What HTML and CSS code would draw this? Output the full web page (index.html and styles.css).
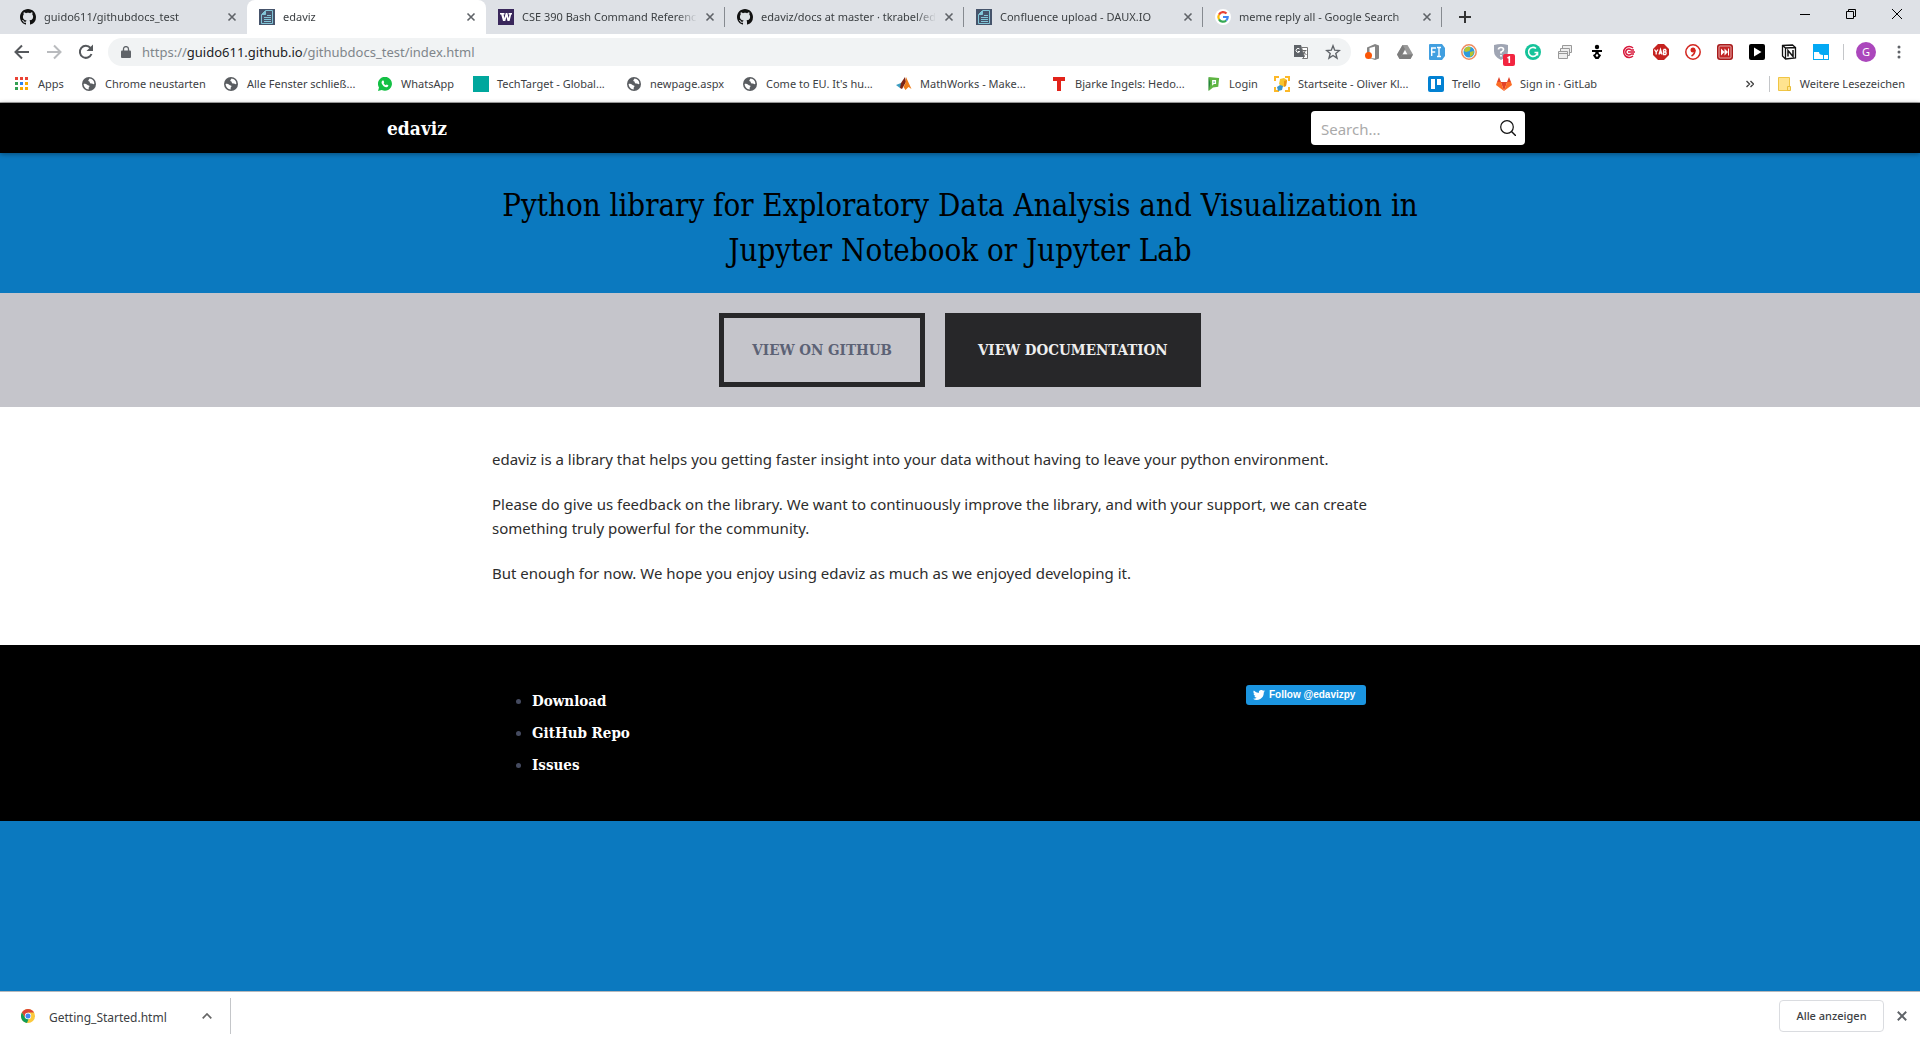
FILE: index.html
```html
<!DOCTYPE html>
<html lang="de">
<head>
<meta charset="utf-8">
<title>edaviz</title>
<link rel="stylesheet" href="styles.css">
</head>
<body>
<svg class="sprite" aria-hidden="true">
  <symbol id="github" viewBox="0 0 16 16"><path fill="#111" d="M8 0C3.58 0 0 3.58 0 8c0 3.54 2.29 6.53 5.47 7.59.4.07.55-.17.55-.38 0-.19-.01-.82-.01-1.49-2.01.37-2.53-.49-2.69-.94-.09-.23-.48-.94-.82-1.13-.28-.15-.68-.52-.01-.53.63-.01 1.08.58 1.23.82.72 1.21 1.87.87 2.33.66.07-.52.28-.87.51-1.07-1.78-.2-3.64-.89-3.64-3.95 0-.87.31-1.59.82-2.15-.08-.2-.36-1.02.08-2.12 0 0 .67-.21 2.2.82.64-.18 1.32-.27 2-.27s1.36.09 2 .27c1.53-1.04 2.2-.82 2.2-.82.44 1.1.16 1.92.08 2.12.51.56.82 1.27.82 2.15 0 3.07-1.87 3.75-3.65 3.95.29.25.54.73.54 1.48 0 1.07-.01 1.93-.01 2.2 0 .21.15.46.55.38A8.01 8.01 0 0 0 16 8c0-4.42-3.58-8-8-8z"/></symbol>
  <symbol id="daux" viewBox="0 0 16 16"><path fill="#46546b" d="M0 0h16v16H0z"/><path fill="none" stroke="#82c6d8" d="M6.500 1.500h7v13h-11v-9zM6.500 2v3.500H3M5 8.500h7M5 10.500h7M5 12.500h7M8 6.500h4"/><path fill="#82c6d8" d="M6.500 1.500v4h-4z"/></symbol>
  <symbol id="close" viewBox="0 0 10 10"><path fill="none" stroke="#5f6368" stroke-width="1.6" d="M1.500 1.500l7 7M8.500 1.500l-7 7"/></symbol>
  <symbol id="globe" viewBox="0 0 14 14"><circle cx="7" cy="7" r="7" fill="#5a5d61"/><path fill="#fff" d="M7.500 1.500c2.800.2 4.700 2.300 4.900 5-.5 1-1.200.6-1.900.2-.8-.4-1.400.1-2.300-.5-.7-.5-.2-1.300-.9-1.600-.8-.3-1.300-.7-.8-1.500zM1.600 7c1.200-.3 2.600-.2 3.600.7.900.8 1.900.5 2.200 1.200.4.800-.8 1.200-.8 2 0 .5.300.9.100 1.500C3.900 12.200 1.700 10 1.600 7z"/></symbol>
</svg>

<header class="browser">
  <div class="tabstrip">
    <div class="tabs">
      <div class="tab"><svg class="i16"><use href="#github"/></svg><span>guido611/githubdocs_test</span><button aria-label="Tab schließen"><svg><use href="#close"/></svg></button></div>
      <div class="tab active"><svg class="i16"><use href="#daux"/></svg><span>edaviz</span><button aria-label="Tab schließen"><svg><use href="#close"/></svg></button></div>
      <div class="tab ruled"><svg class="i16" viewBox="0 0 16 16"><path fill="#39275b" d="M0 0h16v16H0z"/><path fill="#fff" d="M2 4h4.500v1.500h-.9l.8 3.700L7.700 4h1.700l1.200 5.200.8-3.700h-.9V4H14v1.500h-.8L11.600 12H9.500L8.400 7.700 7.300 12H5L3.200 5.500H2z"/></svg><span>CSE 390 Bash Command Reference</span><button aria-label="Tab schließen"><svg><use href="#close"/></svg></button></div>
      <div class="tab ruled"><svg class="i16"><use href="#github"/></svg><span>edaviz/docs at master · tkrabel/edaviz</span><button aria-label="Tab schließen"><svg><use href="#close"/></svg></button></div>
      <div class="tab ruled"><svg class="i16"><use href="#daux"/></svg><span>Confluence upload - DAUX.IO</span><button aria-label="Tab schließen"><svg><use href="#close"/></svg></button></div>
      <div class="tab ruled"><svg class="i16" viewBox="0 0 16 16"><circle cx="8" cy="8" r="8" fill="#fff"/><g fill="none" stroke-width="2.200"><path stroke="#ea4335" d="M4 5.600a4.700 4.700 0 0 1 7.500-1"/><path stroke="#fbbc05" d="M4 5.600a4.900 4.900 0 0 0 0 4.800"/><path stroke="#34a853" d="M4 10.400a4.700 4.700 0 0 0 7.200 1.100"/><path stroke="#4285f4" d="M8 8h4.700a4.700 4.700 0 0 1-1.500 3.500"/></g></svg><span>meme reply all - Google Search</span><button aria-label="Tab schließen"><svg><use href="#close"/></svg></button></div>
      <button class="newtab" aria-label="Neuer Tab"><svg viewBox="0 0 12 12"><path stroke="#333" stroke-width="2" d="M6 0v12M0 6h12"/></svg></button>
    </div>
    <div class="winctl">
      <button aria-label="Minimieren"><svg viewBox="0 0 12 12"><path stroke="#000" d="M1 6.500h10"/></svg></button>
      <button aria-label="Verkleinern"><svg viewBox="0 0 12 12"><path fill="none" stroke="#000" d="M1.500 3.500h7v7h-7zM3.500 3.500v-2h7v7h-2"/></svg></button>
      <button aria-label="Schließen"><svg viewBox="0 0 12 12"><path stroke="#000" d="M1 1l10 10M11 1L1 11"/></svg></button>
    </div>
  </div>

  <div class="toolbar">
    <div class="nav">
      <button aria-label="Zurück"><svg viewBox="0 0 16 16"><path fill="none" stroke="#55585c" stroke-width="2" d="M15 8H2M8 1.500L1.500 8 8 14.500"/></svg></button>
      <button aria-label="Vorwärts"><svg viewBox="0 0 16 16"><path fill="none" stroke="#b9bbbe" stroke-width="2" d="M1 8h13M8 1.500L14.500 8 8 14.500"/></svg></button>
      <button aria-label="Neu laden"><svg viewBox="0 0 16 16"><path fill="none" stroke="#55585c" stroke-width="2" d="M13.500 10A6 6 0 1 1 12.500 4"/><path fill="#55585c" d="M15 .5V7H8.500z"/></svg></button>
    </div>
    <div class="omnibox">
      <svg class="lock" viewBox="0 0 10 12"><path fill="#5f6368" d="M1 4.500h8q1 0 1 1V11q0 1-1 1H1q-1 0-1-1V5.500q0-1 1-1z"/><path fill="none" stroke="#5f6368" stroke-width="1.300" d="M2.500 5V3a2.500 2.400 0 0 1 5 0v2"/></svg>
      <a class="url" href="#">https://<b>guido611.github.io</b>/githubdocs_test/index.html</a>
      <div class="omni-actions">
        <svg class="i16" viewBox="0 0 16 16"><path fill="#5f6368" d="M1 1h7l4 12H1z"/><path fill="#fff" stroke="#777" d="M8.500 3.500h6v11h-5l2-2z"/><path fill="none" stroke="#fff" d="M6.500 5a2 2 0 1 0 .3 2.500H5"/><path fill="none" stroke="#666" d="M9.500 6.500h4M12 6.500c0 2-1 3-2 4M10.500 8l3 3"/></svg>
        <svg class="i16" viewBox="0 0 16 16"><path fill="none" stroke="#5f6368" stroke-width="1.400" d="M8 1.800l1.700 4.400 4.700.3-3.600 3 1.200 4.600L8 11.500l-4 2.600 1.200-4.600-3.600-3 4.700-.3z"/></svg>
      </div>
    </div>
    <div class="ext">
      <svg viewBox="0 0 16 16"><path fill="#858585" d="M2 3.500L10 0l4 1.500v13L10 16l-6-2 6 .5v-12L4.500 4v7L2 12z"/><circle cx="3.500" cy="11.500" r="3.500" fill="#fb5607"/></svg>
      <svg viewBox="0 0 16 16"><path fill="#999" d="M5.500 1h5L16 10.500 13.500 15h-11L0 10.500z"/><path fill="#707070" d="M5.500 1l2.500 4-5.500 10L0 10.500zM5.500 10.500H16L13.500 15h-11z" opacity=".7"/><path fill="#fff" d="M8 6l2.300 4.300H5.700z"/></svg>
      <svg viewBox="0 0 16 16"><path fill="#419fe0" d="M1 0h12l3 4v8l-3 4H1q-1 0-1-1V1q0-1 1-1z"/><path fill="none" stroke="#fff" stroke-width="1.400" d="M2.700 12V4H7M2.700 8h3.500M8 3.500h4M10 3.500v9M8 12.500h4"/></svg>
      <svg viewBox="0 0 16 16"><circle cx="8" cy="8" r="7.200" fill="#fff" stroke="#ef8b5f" stroke-width="1.500"/><circle cx="8" cy="8" r="5.500" fill="#2f9bdc"/><path fill="#b5c531" d="M4 4l3-1.500 3 1L8.500 7 5 8 3 7zM9 8l4-1-1 4-3 2z"/></svg>
      <svg viewBox="0 0 16 16"><path fill="#9fa5b3" d="M1 1q7-2 14 0v6q0 6-7 9-7-3-7-9z"/><path fill="none" stroke="#fff" stroke-width="1.700" d="M5.500 5.500q0-2 2.500-2t2.500 2Q10.500 7 8 8v1.500M8 11v1.500"/><rect x="10" y="10" width="12" height="12" rx="2" fill="#f22540"/><path fill="none" stroke="#fff" stroke-width="1.600" d="M14.500 14l1.800-1v6"/></svg>
      <svg viewBox="0 0 16 16"><circle cx="8" cy="8" r="8" fill="#15c39a"/><path fill="none" stroke="#fff" stroke-width="1.600" d="M11 4.500A4.500 4.500 0 1 0 12.500 8.500H9.500M12.500 8.500v3"/></svg>
      <svg viewBox="0 0 16 16"><g fill="#eee" stroke="#999"><path d="M5.500 1.500h9v7h-9z"/><path d="M3.500 4.500h9v7h-9z"/><path d="M1.500 7.500h9v7h-9zM1.500 9.500h9"/></g></svg>
      <svg viewBox="0 0 16 16"><circle cx="8" cy="3" r="2.200"/><path d="M3 6h10v2H9.500l.5 2q1.500.3 2 1.500L9.500 15H6.500L4 11.500q.5-1.200 2-1.500l.5-2H3z"/><circle cx="8" cy="11.500" r="1.200" fill="#fff"/></svg>
      <svg viewBox="0 0 16 16"><g fill="none" stroke="#d8173a" stroke-width="1.500"><path d="M12 4a5.500 5.500 0 1 0 0 8"/><path d="M10 6a3 3 0 1 0 0 4M7 8h7M10 6h3M10 10h3"/></g></svg>
      <svg viewBox="0 0 16 16"><path fill="#c5221f" d="M5 0h6l5 5v6l-5 5H5l-5-5V5z"/><path fill="none" stroke="#fff" stroke-width="1.300" d="M1.500 5.500L3.200 8l1.700-2.500M3.200 8v2.500M6 10.500l1.500-5 1.500 5M6.500 9h2M10.500 5.500v5h2q1.300-1.300 0-2.500 1-1.200 0-2.500h-2M10.500 8h2"/></svg>
      <svg viewBox="0 0 16 16"><circle cx="8" cy="8" r="7.200" fill="#fff" stroke="#d3261f" stroke-width="1.500"/><circle cx="8" cy="6" r="2.500" fill="#d3261f"/><path fill="none" stroke="#d3261f" stroke-width="1.500" d="M10 6q0 4-3.500 6"/></svg>
      <svg viewBox="0 0 16 16"><rect width="16" height="16" rx="3" fill="#a81c1c"/><rect x="2" y="2" width="12" height="12" rx="1" fill="#c32626" stroke="#e8a9a9"/><path fill="#fff" d="M4 4.500L7.500 8 4 11.500zM7.500 4.500L11 8l-3.500 3.500zM11 4.500h1v7h-1z"/></svg>
      <svg viewBox="0 0 16 16"><rect width="16" height="16" rx="2"/><path fill="#fff" d="M5 3.500L12.500 8 5 12.500z"/></svg>
      <svg viewBox="0 0 16 16"><path fill="#fff" stroke="#111" stroke-width="1.300" d="M1.500 1.500l10-.5 3 2.500V14l-10 1-3-3zM1.500 1.500l3 2.500 10-.5M4.500 4v11"/><path fill="none" stroke="#111" stroke-width="1.500" d="M7 12.500V6.500l5 6v-6.500"/></svg>
      <svg viewBox="0 0 16 16"><path fill="#03a9f4" d="M0 0h16v16H0z"/><path fill="#fff" d="M1 8h5q0 3 4 3h5v4H1z"/><path stroke="#03a9f4" d="M10.500 11v4"/></svg>
    </div>
    <span class="rule"></span>
    <button class="avatar" aria-label="Profil">G</button>
    <button class="dots" aria-label="Menü"><svg viewBox="0 0 4 16"><g fill="#5f6368"><circle cx="2" cy="3" r="1.500"/><circle cx="2" cy="8" r="1.500"/><circle cx="2" cy="13" r="1.500"/></g></svg></button>
  </div>

  <nav class="bookmarks">
    <div class="marks">
      <a href="#"><svg viewBox="0 0 14 14"><path fill="#ea4335" d="M0 0h3v3H0zM5 0h3v3H5zM10 0h3v3h-3z"/><path fill="#34a053" d="M0 5h3v3H0zM0 10h3v3H0z"/><path fill="#2a84f0" d="M5 5h3v3H5z"/><path fill="#f9ab00" d="M10 5h3v3h-3zM5 10h3v3H5zM10 10h3v3h-3z"/></svg>Apps</a>
      <a href="#"><svg><use href="#globe"/></svg>Chrome neustarten</a>
      <a href="#"><svg><use href="#globe"/></svg>Alle Fenster schließ...</a>
      <a href="#"><svg viewBox="0 0 14 14"><path fill="#14c045" d="M0 14l1-3.500A7 7 0 1 1 3.700 13z"/><path fill="#fff" d="M4.500 3.500l1 .1.700 1.700-.6.900q.8 1.500 2.200 2.100l.8-.9 1.800.9q0 1.500-1.700 1.900-3.400 0-5.200-4.200 0-1.700 1-2.500z"/></svg>WhatsApp</a>
      <a class="wide" href="#"><svg viewBox="0 0 16 16"><path fill="#00a79d" d="M0 0h16v16H0z"/></svg>TechTarget - Global...</a>
      <a href="#"><svg><use href="#globe"/></svg>newpage.aspx</a>
      <a href="#"><svg><use href="#globe"/></svg>Come to EU. It's hu...</a>
      <a class="wide" href="#"><svg viewBox="0 0 16 16"><path fill="#3b9cc0" d="M0 9l5-2 2 2-3 3z"/><path fill="#7e2515" d="M5 7l4-6 1 5-4 7-2-1z"/><path fill="#ef7d1a" d="M10 1l5.500 12-3-2-3 3-2-3 2-4z"/></svg>MathWorks - Make...</a>
      <a href="#"><svg viewBox="0 0 14 14"><path fill="#e2231a" d="M1 0h12v4H9v10H5V4H1z"/></svg>Bjarke Ingels: Hedo...</a>
      <a href="#"><svg viewBox="0 0 14 16"><path fill="#5fb543" d="M2 0l12 1-1 10-6 1-5 4z"/><path fill="#24833f" d="M2 0l2 7-2 9z"/><path fill="#fff" d="M6 3.500h4.500v4.500H8l-2 2z"/><path fill="#24a56a" d="M7.500 5H9v1.500H7.500z"/></svg>Login</a>
      <a class="wide" href="#"><svg viewBox="0 0 16 16"><path fill="none" stroke="#fdb827" stroke-width="2" d="M5 1H1v4M11 1h4v4M1 11v4h4M15 11v4h-4"/><path fill="#f8c52c" d="M6 3l4-1 3 2-1 6-4 1-3-3z"/><path fill="#ea9410" d="M10 5l3-1-1 6-2 1z"/><path fill="#3b95c9" d="M3 11l3-2 3 1-1 4-4 1z"/></svg>Startseite - Oliver Kl...</a>
      <a class="wide" href="#"><svg viewBox="0 0 16 16"><rect width="16" height="16" rx="2" fill="#0281d2"/><path fill="#fff" d="M3 3h4v10H3zM9 3h4v6H9z"/></svg>Trello</a>
      <a class="wide" href="#"><svg viewBox="0 0 16 16"><path fill="#e24329" d="M8 15L4.800 6h6.400z"/><path fill="#fc6d26" d="M8 15L0 9l1-3h4zM8 15l8-6-1-3h-4z"/><path fill="#e24329" d="M1 6l2-5 2 5zM15 6l-2-5-2 5z"/></svg>Sign in · GitLab</a>
    </div>
    <div class="others">
      <button aria-label="Weitere Lesezeichen anzeigen"><svg viewBox="0 0 8 8"><path fill="none" stroke="#444" stroke-width="1.400" d="M.5 1l3 3-3 3M4.500 1l3 3-3 3"/></svg></button>
      <span class="rule"></span>
      <a href="#"><svg viewBox="0 0 13 15"><path fill="#ffe38f" stroke="#f0c544" d="M.5.500h11v13H.5z"/><path fill="#ffe38f" stroke="#e8bd38" d="M9.500 9.500h3v4h-3z"/></svg>Weitere Lesezeichen</a>
    </div>
  </nav>
</header>

<main class="page">
  <div class="sitebar">
    <div class="sitebar-in">
      <a class="brand" href="#">edaviz</a>
      <form class="search">
        <input type="search" placeholder="Search..." aria-label="Search">
        <button type="button" aria-label="Search"><svg viewBox="0 0 16 16"><circle cx="7" cy="7" r="6.300" fill="none" stroke="#111" stroke-width="1.200"/><path stroke="#111" stroke-width="1.400" d="M11.500 11.500L16 16"/></svg></button>
      </form>
    </div>
  </div>
  <h1 class="hero">Python library for Exploratory Data Analysis and Visualization in Jupyter Notebook or Jupyter Lab</h1>
  <div class="actions">
    <a class="btn ghost" href="#">View On GitHub</a>
    <a class="btn solid" href="#">View Documentation</a>
  </div>
  <section class="prose">
    <div class="wrap">
      <p>edaviz is a library that helps you getting faster insight into your data without having to leave your python environment.</p>
      <p>Please do give us feedback on the library. We want to continuously improve the library, and with your support, we can create something truly powerful for the community.</p>
      <p>But enough for now. We hope you enjoy using edaviz as much as we enjoyed developing it.</p>
    </div>
  </section>
  <footer class="foot">
    <div class="wrap foot-in">
      <ul>
        <li><a href="#">Download</a></li>
        <li><a href="#">GitHub Repo</a></li>
        <li><a href="#">Issues</a></li>
      </ul>
      <a class="follow" href="#"><svg viewBox="0 0 24 20"><path fill="#fff" d="M24 2.400a10 10 0 0 1-2.800.8A5 5 0 0 0 23.300.5a10 10 0 0 1-3.100 1.200 4.900 4.900 0 0 0-8.400 4.500A14 14 0 0 1 1.700 1a4.900 4.900 0 0 0 1.500 6.600A5 5 0 0 1 1 7v.1a4.900 4.900 0 0 0 3.900 4.800 5 5 0 0 1-2.200.1 4.900 4.900 0 0 0 4.600 3.400A10 10 0 0 1 0 17.500 14 14 0 0 0 21.500 5z"/></svg>Follow @edavizpy</a>
    </div>
  </footer>
</main>

<div class="downloads">
  <a class="file" href="#"><svg viewBox="0 0 14 14"><circle cx="7" cy="7" r="7" fill="#fbc93d"/><path fill="#db4437" d="M.9 3.600A7 7 0 0 1 13.100 3.600H7L4 8.500z"/><path fill="#0f9d58" d="M.9 3.600L4 8.700 7.500 10.200 6 14A7 7 0 0 1 .9 3.600z"/><circle cx="7" cy="7" r="3.200" fill="#fff"/><circle cx="7" cy="7" r="2.500" fill="#4285f4"/></svg><span>Getting_Started.html</span></a>
  <button class="up" aria-label="Optionen"><svg viewBox="0 0 10 6"><path fill="none" stroke="#666" stroke-width="1.700" d="M.7 5.300L5 1l4.300 4.300"/></svg></button>
  <button class="all">Alle anzeigen</button>
  <button class="shut" aria-label="Leiste schließen"><svg><use href="#close"/></svg></button>
</div>
</body>
</html>
```
FILE: styles.css
```css
* { box-sizing: border-box; }
body {
  margin: 0;
  min-height: 100vh;
  display: flex;
  flex-direction: column;
  font: 12px/16px "Noto Sans", "Open Sans", sans-serif;
  color: #3c4043;
  background: #fff;
}
.sprite { display: none; }
a { color: inherit; text-decoration: none; }
button { padding: 0; border: 0; background: none; font: inherit; color: inherit; display: grid; place-items: center; }
svg { flex: none; display: block; }
.i16 { width: 16px; height: 16px; }

/* Browser chrome */
.browser { border-bottom: 1px solid #a9a9a9; }
.tabstrip { display: flex; justify-content: space-between; height: 34px; background: #dee1e6; }
.tabs { display: flex; flex: 1; padding-left: 8px; min-width: 0; }
.tab { display: flex; align-items: center; gap: 8px; flex: 0 1 239px; min-width: 0; padding: 0 10px 0 12px; }
.tab span {
  flex: 1; overflow: hidden; white-space: nowrap; font-size: 11px;
  -webkit-mask-image: linear-gradient(to right, #000 calc(100% - 20px), transparent);
  mask-image: linear-gradient(to right, #000 calc(100% - 20px), transparent);
}
.tab button svg { width: 10px; height: 10px; }
.tab.active { background: #fff; border-radius: 8px 8px 0 0; }
.tab.ruled { background: linear-gradient(#868a90, #868a90) right center / 1px 20px no-repeat; }
.newtab { width: 46px; }
.newtab svg { width: 12px; height: 12px; }
.winctl { display: flex; height: 28px; }
.winctl button { width: 46px; }
.winctl svg { width: 12px; height: 12px; }

.toolbar { display: flex; align-items: center; height: 36px; padding: 0 17px 0 14px; }
.nav { display: flex; gap: 16px; margin-right: 14px; }
.nav button { width: 16px; height: 16px; }
.nav svg { width: 16px; height: 16px; }
.omnibox { display: flex; align-items: center; gap: 11px; flex: 1; height: 28px; padding: 0 10px 0 13px; border-radius: 14px; background: #f1f3f4; }
.omni-actions { display: flex; gap: 16px; }
.lock { width: 10px; height: 12px; }
.url { flex: 1; font-size: 13px; color: #80868b; }
.url b { font-weight: 400; color: #202124; }
.ext { display: flex; gap: 16px; margin-left: 14px; }
.ext svg { width: 16px; height: 16px; overflow: visible; }
.rule { width: 1px; height: 16px; background: #c4c6c9; }
.toolbar .rule { margin: 0 12px 0 14px; }
.avatar { width: 20px; height: 20px; border-radius: 50%; background: #ab47bc; color: #fff; font-size: 11px; margin-right: 19px; }
.dots { width: 8px; }
.dots svg { width: 4px; height: 16px; }

.bookmarks { display: flex; justify-content: space-between; align-items: center; height: 32px; padding: 0 15px 4px; font-size: 11px; white-space: nowrap; }
.marks { display: grid; align-items: center; grid-template-columns: 67px 142px 154px 95px 154px 116px 153px 156px 154px 68px 154px 68px 110px; }
.marks a { display: flex; align-items: center; gap: 9px; }
.marks svg { width: 14px; height: 14px; }
.marks .wide { gap: 8px; }
.marks .wide svg { width: 16px; height: 16px; }
.others { display: flex; align-items: center; gap: 8px; }
.others a { display: flex; align-items: center; gap: 9px; }
.others button { margin-right: 7px; }
.others button svg { width: 8px; height: 8px; }
.others a svg { width: 13px; height: 15px; }

/* Page */
.page { flex: 1; background: #0b79bf; }
.sitebar { position: relative; background: #000; box-shadow: 0 1px 5px rgba(0, 0, 0, .4); }
.sitebar-in { display: flex; align-items: center; justify-content: space-between; max-width: 1146px; height: 50px; margin: 0 auto; padding-right: 8px; }
.brand, .hero, .btn, .foot { font-family: "Roboto Slab", "DejaVu Serif Condensed", "DejaVu Serif", serif; }
.brand { font-size: 19px; line-height: 24px; font-weight: 700; color: #fff; }
.search { display: flex; align-items: center; width: 214px; height: 34px; padding-right: 9px; border-radius: 4px; background: #fff; }
.search input { flex: 1; min-width: 0; height: 34px; padding: 2px 10px 0; border: 0; background: none; font: 15px/20px "Noto Sans", sans-serif; }
.search input::placeholder { color: #aaa; }
.search svg { width: 16px; height: 16px; }
.hero { max-width: 936px; margin: 0 auto; padding: 30px 0 20px; font-size: 31px; line-height: 45px; font-weight: 300; text-align: center; color: #000; }
.actions { display: flex; justify-content: center; gap: 20px; padding: 20px; background: #c5c5cb; }
.btn { padding: 20px 28px; border: 5px solid #272729; font-size: 15px; line-height: 24px; font-weight: 700; text-transform: uppercase; }
.ghost { color: #5c6275; }
.solid { background: #272729; color: #eee; }
.wrap { max-width: 936px; margin: 0 auto; }
.prose { padding: 40px 0 60px; background: #fff; color: #2d2d2d; font-size: 15px; line-height: 24px; }
.prose p { margin: 0 0 21px; }
.prose p:last-child { margin: 0; }
.foot { padding: 40px 0; background: #000; font-size: 15px; line-height: 32px; font-weight: 700; }
.foot-in { display: flex; justify-content: space-between; align-items: flex-start; padding-right: 62px; }
.foot ul { margin: 0; padding-left: 40px; color: #fff; }
.foot li::marker { color: #454b60; }
.follow { display: flex; align-items: center; gap: 4px; width: 120px; height: 20px; padding-left: 7px; border-radius: 3px; background: #1b95e0; color: #fff; font: bold 10px/20px "Liberation Sans", Arial, sans-serif; white-space: nowrap; }
.follow svg { width: 12px; height: 10px; }

/* Download shelf */
.downloads { display: flex; align-items: center; height: 49px; padding-right: 12px; border-top: 1px solid #b5b8bb; background: #fff; }
.file { display: flex; align-items: center; gap: 14px; width: 200px; padding-left: 21px; }
.file svg { width: 14px; height: 14px; }
.file span { padding-top: 4px; }
.up { width: 31px; height: 36px; padding-right: 17px; border-right: 1px solid #c4c6c9; }
.up svg { width: 10px; height: 6px; }
.all { width: 105px; height: 32px; margin-left: auto; border: 1px solid #dadce0; border-radius: 4px; font-size: 11px; font-weight: 500; }
.shut { margin-left: 12px; }
.shut svg { width: 12px; height: 12px; }
```
